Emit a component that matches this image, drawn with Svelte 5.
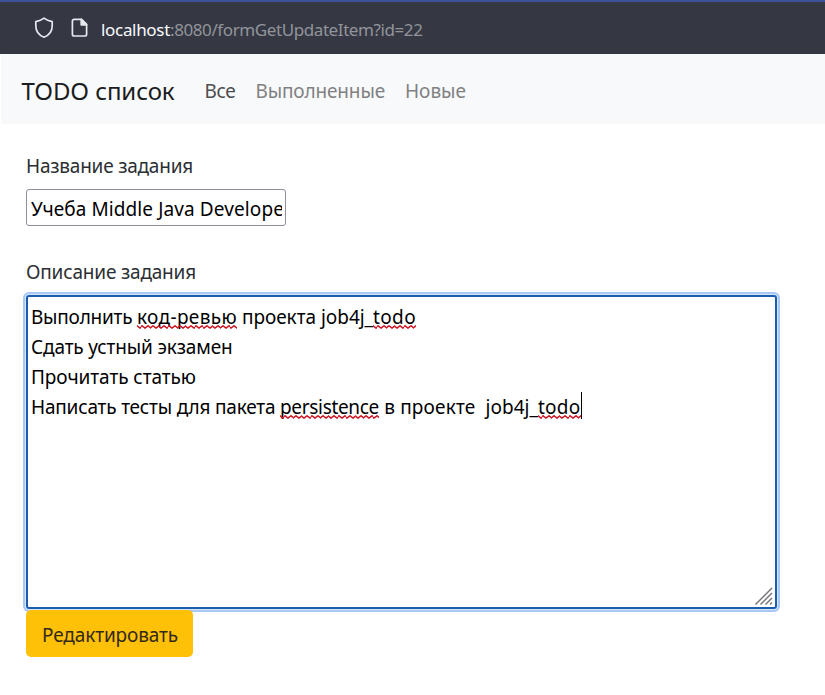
<script>
  const links = [
    { text: 'Все', active: true, width: 31 },
    { text: 'Выполненные', active: false, width: 129.5 },
    { text: 'Новые', active: false, width: 61 }
  ];

  const lines = [
    [
      { text: 'Выполнить ', width: 106 },
      { text: 'код-ревью', width: 100, wrong: true },
      { text: ' проекта', width: 79 },
      { text: ' job4j_', width: 57 },
      { text: 'todo', width: 43, wrong: true }
    ],
    [{ text: 'Сдать устный экзамен', width: 201.5 }],
    [{ text: 'Прочитать статью', width: 165 }],
    [
      { text: 'Написать тесты для пакета ', width: 249 },
      { text: 'persistence', width: 99, wrong: true },
      { text: ' в проекте', width: 96.5 },
      { text: '  job4j_', width: 62.5 },
      { text: 'todo', width: 42.5, wrong: true, caret: true }
    ]
  ];

  // Spreads the glyphs of an element over the given width.
  function fit(node, width) {
    const run = node.querySelector('.run') ?? node;
    const natural = run.getBoundingClientRect().width;
    const spacing = (width - natural) / run.textContent.length;
    run.style.letterSpacing = `${spacing}px`;
  }
</script>

<div class="page">
  <header class="address">
    <svg class="shield" width="20" height="22" viewBox="0 0 20 22" fill="none" stroke="#e6e8ee" stroke-width="1.7" stroke-linejoin="round">
      <path d="M10 1.2 C12 2.8 15 4 18.2 4.6 V8.8 C18.2 14 15.2 18.3 10 20.2 C4.8 18.3 1.8 14 1.8 8.8 V4.6 C5 4 8 2.8 10 1.2 Z" />
    </svg>
    <svg class="file" width="18" height="20" viewBox="0 0 18 20" fill="none" stroke="#e6e8ee" stroke-width="1.7" stroke-linejoin="round">
      <path d="M3.2 1.4 H10.6 L15.6 6.4 V16.2 A1.8 1.8 0 0 1 13.8 18 H3.2 A1.8 1.8 0 0 1 1.4 16.2 V3.2 A1.8 1.8 0 0 1 3.2 1.4 Z" />
      <path d="M10.2 1.4 V6.8 H15.6 Z" fill="#e6e8ee" />
    </svg>
    <div class="url"><span class="host" use:fit={69}>localhost</span><span use:fit={252.5}>:8080/formGetUpdateItem?id=22</span></div>
  </header>

  <nav>
    <div class="brand"><span use:fit={153}>TODO список</span></div>
    {#each links as link}
      <div class="link" class:active={link.active}><span use:fit={link.width}>{link.text}</span></div>
    {/each}
  </nav>

  <main>
    <div class="label"><span use:fit={167}>Название задания</span></div>
    <div class="input"><div class="clip"><span use:fit={261}>Учеба Middle Java Developer</span></div></div>
    <div class="label second"><span use:fit={170}>Описание задания</span></div>
    <div class="textarea">
      {#each lines as line}
        <div class="line">
          {#each line as part}<span class="part" class:wrong={part.wrong} class:caret={part.caret} use:fit={part.width}><span class="run">{part.text}</span></span>{/each}
        </div>
      {/each}
      <svg class="grip" width="20" height="20" viewBox="0 0 20 20" stroke="#77777c" stroke-width="1.5">
        <path d="M1.5 18.5 L18 2 M6.5 18.5 L18 7 M11.5 18.5 L18 12 M16 18.5 L18 16.5" />
      </svg>
    </div>
    <button><span use:fit={136}>Редактировать</span></button>
  </main>
</div>

<style>
  :global(body) {
    margin: 0;
    background: #fff;
  }
  .page {
    width: 825px;
    height: 695px;
    overflow: hidden;
    font-family: "Noto Sans", "Open Sans", sans-serif;
    font-size: 19px;
    line-height: 30px;
    color: #212529;
  }
  span {
    display: inline-block;
    white-space: pre;
  }
  .address {
    box-sizing: border-box;
    height: 54px;
    display: flex;
    align-items: flex-start;
    padding-left: 34px;
    border-top: 2px solid #3b529a;
    background: #353843;
  }
  .shield {
    margin-top: 15px;
  }
  .file {
    margin: 16px 0 0 17px;
  }
  .url {
    margin: 13px 0 0 12px;
    font-size: 17px;
    color: #92949b;
    white-space: nowrap;
  }
  .host {
    color: #fbfbfe;
  }
  nav {
    box-sizing: border-box;
    height: 70px;
    margin-left: 1px;
    padding: 3px 0 0 20.5px;
    display: flex;
    align-items: center;
    background: #f8f9fa;
    white-space: nowrap;
  }
  .brand {
    font-size: 24px;
    margin-right: 10px;
    color: #1b1c1d;
  }
  .link {
    margin-left: 20px;
    color: #808182;
  }
  .link.active {
    color: #4c4d4e;
  }
  main {
    padding: 27px 0 0 26px;
  }
  .label {
    height: 30px;
    margin-bottom: 8px;
    color: #2b2f33;
  }
  .second {
    margin-top: 31px;
  }
  .input {
    box-sizing: border-box;
    width: 260px;
    height: 37px;
    border: 1px solid #8f8f9d;
    border-radius: 3px;
    padding: 4px 3px 1px 4px;
    color: #000;
  }
  .clip {
    overflow: hidden;
  }
  .textarea {
    position: relative;
    box-sizing: border-box;
    width: 751px;
    height: 314px;
    padding: 5px 3px;
    border: 2px solid #1b5dab;
    border-radius: 3px;
    box-shadow: 0 0 0 1px #d3e6fb, 0 0 0 3px #a9c8f5;
    color: #000;
  }
  .line {
    height: 30px;
    white-space: nowrap;
  }
  .part {
    position: relative;
  }
  .wrong::after {
    content: "";
    position: absolute;
    left: 0;
    right: 0;
    top: 22.5px;
    height: 4px;
    background: url("data:image/svg+xml,%3Csvg xmlns='http://www.w3.org/2000/svg' width='5.4' height='4' viewBox='0 0 5.4 4'%3E%3Cpath d='M-1 1.6L0 .8L2.7 3.1L5.4 .8L6.4 1.6' fill='none' stroke='%23cc1420' stroke-width='1.4'/%3E%3C/svg%3E") repeat-x;
  }
  .caret::before {
    content: "";
    position: absolute;
    right: -1px;
    top: 0;
    width: 1px;
    height: 27px;
    background: #000;
  }
  .grip {
    position: absolute;
    right: 1px;
    bottom: 1px;
  }
  button {
    position: relative;
    display: block;
    width: 167px;
    height: 47px;
    margin: 1px 0 0;
    padding: 2px 0 0 16px;
    border: 0;
    border-radius: 5px;
    background: #ffc107;
    color: #33291a;
    font: inherit;
    text-align: left;
  }
</style>
